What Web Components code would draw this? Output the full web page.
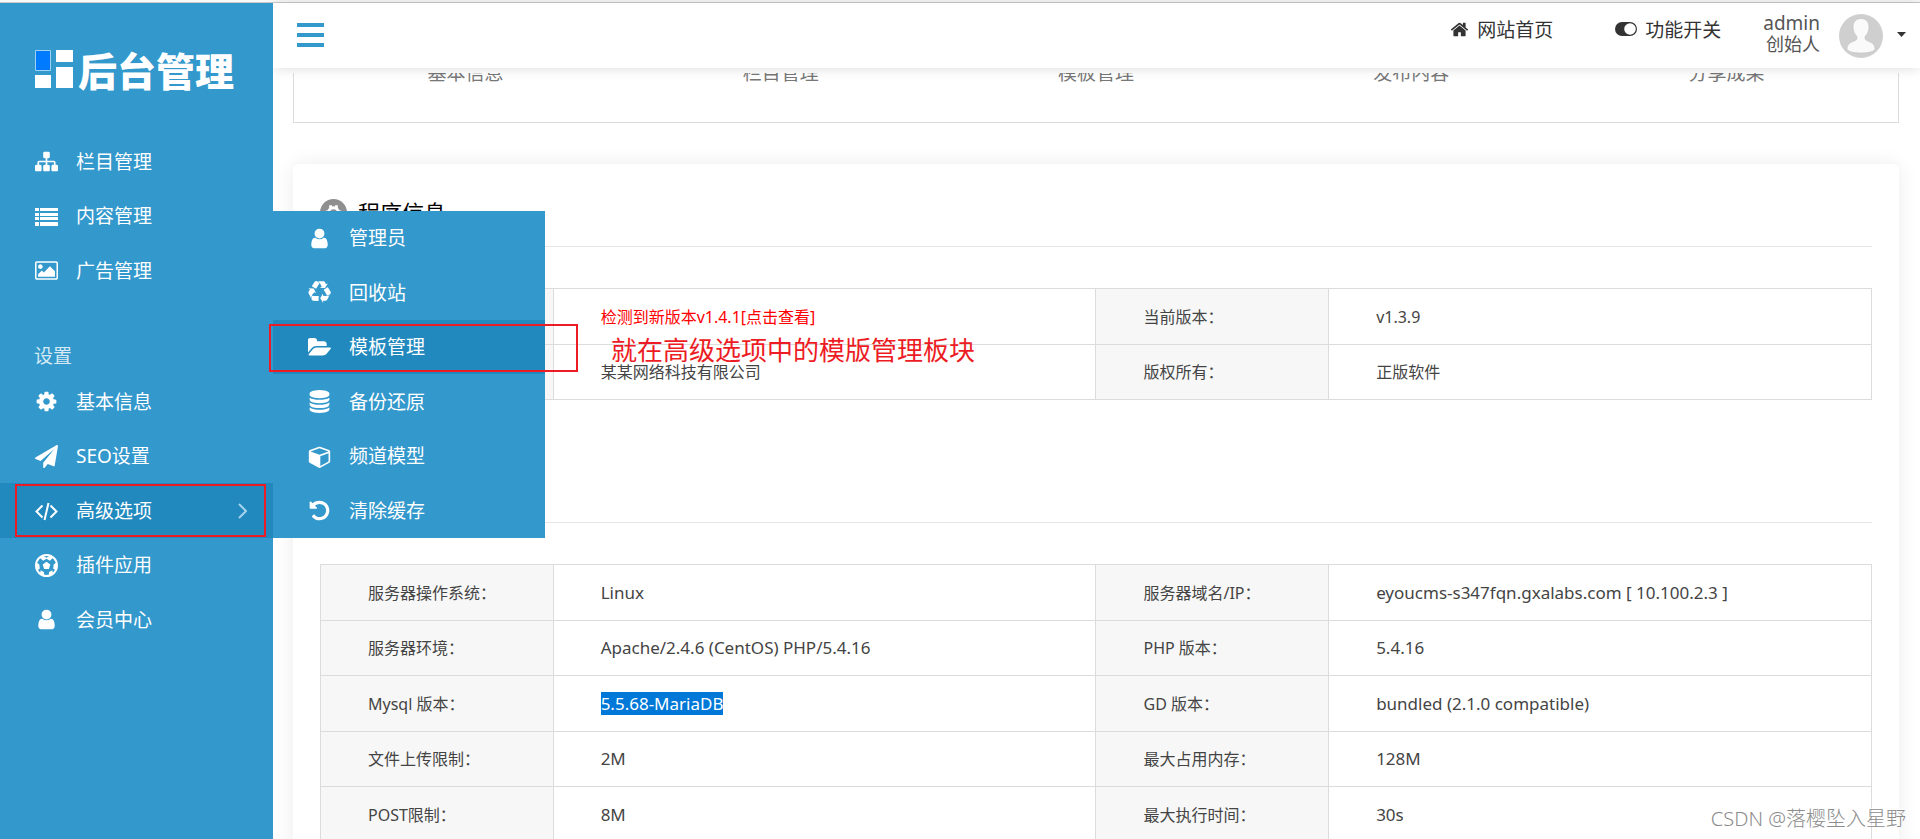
<!DOCTYPE html>
<html lang="zh-CN">
<head>
<meta charset="utf-8">
<title>后台管理</title>
<style>
body{margin:0;font-family:"Noto Sans","Noto Sans CJK SC",sans-serif;font-size:16px;color:#444;background:#fff}
</style>
</head>
<body>
<admin-app>
  <side-bar slot="side">
    <nav-group>
      <nav-item icon="sitemap">栏目管理</nav-item>
      <nav-item icon="list">内容管理</nav-item>
      <nav-item icon="image">广告管理</nav-item>
    </nav-group>
    <nav-group heading="设置">
      <nav-item icon="cog">基本信息</nav-item>
      <nav-item icon="plane">SEO设置</nav-item>
      <nav-item icon="code" active more>高级选项
        <nav-flyout slot="flyout">
          <nav-item icon="user">管理员</nav-item>
          <nav-item icon="recycle">回收站</nav-item>
          <nav-item icon="folder" active>模板管理</nav-item>
          <nav-item icon="database">备份还原</nav-item>
          <nav-item icon="cube">频道模型</nav-item>
          <nav-item icon="undo">清除缓存</nav-item>
        </nav-flyout>
      </nav-item>
      <nav-item icon="ball">插件应用</nav-item>
      <nav-item icon="user">会员中心</nav-item>
    </nav-group>
  </side-bar>
  <top-bar slot="top"></top-bar>
  <quick-links></quick-links>
  <info-card>
    <card-heading icon="gearDisc">程序信息</card-heading>
    <info-table data="program"></info-table>
    <card-heading></card-heading>
    <info-table data="server"></info-table>
  </info-card>
</admin-app>
<mark-box class="m1"></mark-box>
<mark-box class="m2"></mark-box>
<mark-note>就在高级选项中的模版管理板块</mark-note>
<water-mark>CSDN @落樱坠入星野</water-mark>

<script>
const svg = (vb, body) => `<svg viewBox="${vb}" aria-hidden="true" fill="currentColor">${body}</svg>`;
const glyph = d => svg("0 0 1792 1792", `<path d="${d}"/>`);
const ICONS = {
  user: glyph("M1536 1399q0 109-62.500 187t-150.500 78h-854q-88 0-150.500-78t-62.500-187q0-85 8.500-160.500t31.500-152 58.500-131 94-89 134.500-34.500q131 128 313 128t313-128q76 0 134.500 34.500t94 89 58.500 131 31.500 152 8.500 160.500zm-256-887q0 159-112.500 271.500t-271.500 112.500-271.500-112.500-112.500-271.500 112.500-271.500 271.500-112.500 271.500 112.500 112.500 271.500z"),
  sitemap: glyph("M1792 1248v320q0 40-28 68t-68 28h-320q-40 0-68-28t-28-68v-320q0-40 28-68t68-28h96v-192h-512v192h96q40 0 68 28t28 68v320q0 40-28 68t-68 28h-320q-40 0-68-28t-28-68v-320q0-40 28-68t68-28h96v-192h-512v192h96q40 0 68 28t28 68v320q0 40-28 68t-68 28h-320q-40 0-68-28t-28-68v-320q0-40 28-68t68-28h96v-192q0-52 38-90t90-38h512v-192h-96q-40 0-68-28t-28-68v-320q0-40 28-68t68-28h320q40 0 68 28t28 68v320q0 40-28 68t-68 28h-96v192h512q52 0 90 38t38 90v192h96q40 0 68 28t28 68z"),
  list: svg("0 0 23 23", `<path d="M0 3h4v3H0zM5 3h18v3H5zM0 8h4v3H0zM5 8h18v3H5zM0 12h4v3H0zM5 12h18v3H5zM0 17h4v4H0zM5 17h18v4H5z"/>`),
  image: svg("-64 0 1920 1792", `<path d="M576 576q0 80-56 136t-136 56-136-56-56-136 56-136 136-56 136 56 56 136zm1024 384v448h-1408v-192l320-320 160 160 512-512zm96-704h-1600q-13 0-22.500 9.500t-9.500 22.500v1216q0 13 9.500 22.500t22.500 9.500h1600q13 0 22.500-9.500t9.500-22.500v-1216q0-13-9.500-22.500t-22.500-9.500zm160 32v1216q0 66-47 113t-113 47h-1600q-66 0-113-47t-47-113v-1216q0-66 47-113t113-47h1600q66 0 113 47t47 113z"/>`),
  cog: glyph("M1152 896q0-106-75-181t-181-75-181 75-75 181 75 181 181 75 181-75 75-181zm512-109v222q0 12-8 23t-20 13l-185 28q-19 54-39 91 35 50 107 138 10 12 10 25t-9 23q-27 37-99 108t-94 71q-12 0-26-9l-138-108q-44 23-91 38-16 136-29 186-7 28-36 28h-222q-14 0-24.500-8.500t-11.500-21.500l-28-184q-49-16-90-37l-141 107q-10 9-25 9-14 0-25-11-126-114-165-168-7-10-7-23 0-12 8-23 15-21 51-66.500t54-70.500q-27-50-41-99l-183-27q-13-2-21-12.500t-8-23.500v-222q0-12 8-23t19-13l186-28q14-46 39-92-40-57-107-138-10-12-10-24 0-10 9-23 26-36 98.500-107.500t94.500-71.500q13 0 26 10l138 107q44-23 91-38 16-136 29-186 7-28 36-28h222q14 0 24.500 8.500t11.500 21.500l28 184q49 16 90 37l142-107q9-9 24-9 13 0 25 10 129 119 165 170 7 8 7 22 0 12-8 23-15 21-51 66.500t-54 70.500q26 50 41 98l183 28q13 2 21 12.500t8 23.500z"),
  plane: glyph("M1764 11q33 24 27 64l-256 1536q-5 29-32 45-14 8-31 8-11 0-24-5l-453-185-242 295q-18 23-49 23-13 0-22-4-19-7-30.500-23.500t-11.500-36.500v-349l864-1059-1069 925-395-162q-37-14-40-55-2-40 32-59l1664-960q15-9 32-9 20 0 36 11z"),
  code: svg("0 0 23 23", `<path fill="none" stroke="currentColor" stroke-width="2" d="M7.500 6.500L1.500 12.500l6 6M15.500 6.500l6 6-6 6M13.500 4l-4 17"/>`),
  ball: svg("0 0 24 24", `<circle cx="12" cy="12" r="11" fill="none" stroke="currentColor" stroke-width="2"/><path d="M12 8l4 3-1.500 4.700h-5L8 11zM8 1.500L12 4l4-2.500 3 2.500-3.500 3L12 5 8.500 7 5 4zM1.500 8.500L4.500 11l.5 4.500-3 1.500L.8 12zM22.500 8.500L19.500 11l-.5 4.500 3 1.500 1.200-5zM6 17l3.500 2-.3 4L5 21zM18 17l-3.500 2 .3 4L19 21z"/>`),
  recycle: glyph("M836 1169l-15 368-2 22-420-29q-36-3-67-31.500t-47-65.500q-11-27-14.500-55t4-65 12-55 21.500-64 19-53q78 12 509 28zm-387-586l180 379-147-92q-63 72-111.500 144.500t-72.500 125-39.500 94.500-18.500 63l-4 21-190-357q-17-26-18-56t6-47l8-18q35-63 114-188l-140-86zm1231 517l-188 359q-12 29-36.500 46.500t-43.500 20.500l-18 4q-71 7-219 12l8 164-230-367 211-362 7 173q170 16 283 5t170-33zm-785-924q-47 63-265 435l-317-187-19-12 225-356q20-31 60-45t80-10q24 2 48.500 12t42 21 41.500 33 36 34.500 36 39.500 32 35zm655 307l212 363q18 37 12.500 76t-27.500 74q-13 20-33 37t-38 28-48.500 22-47 16-51.500 14-46 12q-34-72-265-436l313-195zm-143-226l142-83-220 373-419-20 151-86q-34-89-75-166t-75.500-123.500-64.500-80-47-46.500l-17-13 405 1q31-3 58 10.500t39 28.500l11 15q39 61 112 190z"),
  folder: svg("-30 0 1850 1792", `<path d="M1815 952q0 31-31 66l-336 396q-43 51-120.500 86.500t-143.500 35.500h-1088q-34 0-60.500-13t-26.500-43q0-31 31-66l336-396q43-51 120.500-86.500t143.500-35.500h1088q34 0 60.500 13t26.500 43zm-343-344v160h-832q-94 0-197 47.500t-164 119.500l-337 396-5 6q0-4-.5-12.500t-.5-12.500v-960q0-92 66-158t158-66h320q92 0 158 66t66 158v32h544q92 0 158 66t66 158z"/>`),
  database: glyph("M896 768q237 0 443-43t325-127v170q0 69-103 128t-280 93.500-385 34.500-385-34.500-280-93.500-103-128v-170q119 84 325 127t443 43zm0 768q237 0 443-43t325-127v170q0 69-103 128t-280 93.500-385 34.500-385-34.500-280-93.500-103-128v-170q119 84 325 127t443 43zm0-384q237 0 443-43t325-127v170q0 69-103 128t-280 93.500-385 34.500-385-34.500-280-93.500-103-128v-170q119 84 325 127t443 43zm0-1152q208 0 385 34.500t280 93.500 103 128v128q0 69-103 128t-280 93.500-385 34.500-385-34.500-280-93.500-103-128v-128q0-69 103-128t280-93.500 385-34.500z"),
  cube: svg("-64 0 1792 1792", `<path d="M896 1629l640-349v-636l-640 233v752zm-64-865l698-254-698-254-698 254zm832-252v768q0 35-18 65t-49 47l-704 384q-28 16-61 16t-61-16l-704-384q-31-17-49-47t-18-65v-768q0-40 23-73t61-47l704-256q22-8 44-8t44 8l704 256q38 14 61 47t23 73z"/>`),
  undo: glyph("M1664 896q0 156-61 298t-164 245-245 164-298 61q-172 0-327-72.500t-264-204.500q-7-10-6.500-22.500t8.500-20.500l137-138q10-9 25-9 16 2 23 12 73 95 179 147t225 52q104 0 198.500-40.500t163.500-109.500 109.500-163.500 40.500-198.500-40.500-198.500-109.500-163.500-163.500-109.500-198.500-40.500q-98 0-188 35.500t-160 101.500l137 138q31 30 14 69-17 40-59 40h-448q-26 0-45-19t-19-45v-448q0-42 40-59 39-17 69 14l130 129q107-101 244.500-156.500t284.500-55.500q156 0 298 61t245 164 164 245 61 298z"),
  home: glyph("M1472 992v480q0 26-19 45t-45 19h-384v-384h-256v384h-384q-26 0-45-19t-19-45v-480q0-1 .5-3t.5-3l575-474 575 474q1 2 1 6zm223-69l-62 74q-8 9-21 11h-3q-13 0-21-7l-692-577-692 577q-12 8-24 7-13-2-21-11l-62-74q-8-10-7-23.500t11-21.500l719-599q32-26 76-26t76 26l244 204v-195q0-14 9-23t23-9h192q14 0 23 9t9 23v408l219 182q10 8 11 21.500t-7 23.500z"),
  toggle: svg("0 0 22 19", `<rect y="2" width="22" height="14" rx="7"/><circle cx="15" cy="9" r="5.800" fill="#fff"/>`),
  gearDisc: svg("0 0 28 28", `<circle cx="14" cy="14" r="14" fill="#8f8f8f"/><circle cx="14" cy="14" r="5" fill="none" stroke="#fff" stroke-width="3"/><path fill="#fff" d="M9.500 6.500h3v3h-3zM15.500 6.500h3v3h-3zM6 12h3v4H6zM19 12h3v4h-3zM9.500 19h3v3h-3zM15.500 19h3v3h-3z"/>`)
};

const define = (name, render) => customElements.define(name, class extends HTMLElement {
  constructor(){ super(); this.attachShadow({mode:"open"}); }
  connectedCallback(){ this.shadowRoot.innerHTML = render(this); }
});

define("admin-app", () => `<style>
:host{display:flex;flex-direction:column;height:100vh;overflow:hidden}
.edge{flex:none;height:2px;background:#fafafa;border-bottom:1px solid #ccc}
.shell{flex:1;display:flex;min-height:0}
.main{flex:1;display:flex;flex-direction:column;min-width:0}
main{flex:1;min-height:0;margin-top:5px;padding:0 21px 0 20px;overflow:hidden}
</style>
<div class="edge"></div>
<div class="shell"><slot name="side"></slot><div class="main"><slot name="top"></slot><main><slot></slot></main></div></div>`);

define("side-bar", () => `<style>
:host{display:flex;flex-direction:column;flex:none;width:273px;background:#3398cc;color:#fff;position:relative;z-index:3}
h1{display:flex;align-items:center;gap:4px;height:80px;margin:26px 0 25px;padding-left:35px;font-size:39px;line-height:40px;font-weight:900;font-family:"Noto Sans CJK SC",sans-serif}
svg{width:40px;height:40px;margin-left:-1px}
</style>
<h1><svg viewBox="0 0 40 40" aria-hidden="true"><path fill="#fff" d="M22 1h17v12H22zM22 18h17v21H22zM1 26h16v13H1z"/><path fill="#007bff" stroke="#9fd0f5" d="M1.500 1.500h15v20h-15z"/></svg><span>后台管理</span></h1>
<nav><slot></slot></nav>`);

define("nav-group", el => `<style>
:host{display:block}
h2{margin:41px 0 1px;padding-left:34px;font-size:19px;line-height:34px;font-weight:400;color:#d6eaf5}
</style>${el.getAttribute("heading") ? `<h2>${el.getAttribute("heading")}</h2>` : ""}<slot></slot>`);

define("nav-flyout", () => `<style>
:host{display:block;position:absolute;left:100%;bottom:0;width:272px;background:#3398cc}
::slotted(nav-item:nth-child(odd)){--row:54px}
::slotted(nav-item:nth-child(even)){--row:55px}
</style><slot></slot>`);

define("nav-item", el => `<style>
:host{display:block;position:relative}
:host([active]){background:#2189be}
:host(:nth-child(odd)){--row:55px}
:host(:nth-child(even)){--row:54px}
a{display:flex;align-items:center;height:var(--row);padding:0 26px 0 35px;color:#fff;font-size:19px;line-height:28px;text-decoration:none}
.ico{flex:none;width:23px;height:23px;margin-right:18px}
.ico svg{display:block;width:23px;height:23px}
.label{flex:1;white-space:nowrap}
.more{width:9px;height:16px;color:#a6d3ee}
</style>
<a href="#"><span class="ico">${ICONS[el.getAttribute("icon")]}</span><span class="label"><slot></slot></span>${el.hasAttribute("more") ? `<svg class="more" viewBox="0 0 9 16" fill="none" stroke="currentColor" stroke-width="2" aria-hidden="true"><path d="M1 1l7 7-7 7"/></svg>` : ""}</a><slot name="flyout"></slot>`);

define("top-bar", () => `<style>
:host{display:flex;align-items:center;flex:none;height:65px;padding:0 14px 0 24px;background:#fff;box-shadow:0 0 12px rgba(0,0,0,.15);position:relative;z-index:2;color:#333}
button{border:0;background:none;padding:0;font:inherit;color:inherit}
.menu{display:grid;gap:6px;width:27px;margin:0 auto 2px 0}
.menu i{height:4px;background:#3398cc}
a{display:flex;align-items:center;gap:8px;margin-bottom:12px;font-size:19px;line-height:24px;color:#333;text-decoration:none}
a svg{width:19px;height:19px}
a.switch{margin:0 42px 12px 62px}
a.switch svg{width:22px;height:19px}
.who{display:flex;align-items:center}
.name{display:grid;text-align:right;font-size:19px;line-height:21px;color:#555;margin:0 19px 4px 0}
.name small{font-size:18px}
.avatar{width:44px;height:44px}
.caret{width:9px;height:5px;margin:0 0 2px 14px}
</style>
<button class="menu" aria-label="菜单"><i></i><i></i><i></i></button>
<a href="#">${ICONS.home}网站首页</a>
<a href="#" class="switch">${ICONS.toggle}功能开关</a>
<button class="who"><span class="name"><span>admin</span><small>创始人</small></span>
<svg class="avatar" viewBox="0 0 44 44" aria-hidden="true"><circle cx="22" cy="22" r="22" fill="#cfcfcf"/><path fill="#fafafa" stroke="#bdbdbd" stroke-width=".6" d="M22 4.500c5 0 8 3.500 8 8.500 0 4-1.500 7-3.500 9-.8 1-.7 3 .5 4 2 1.500 9 2.500 9 8.500 0 3-6 4.500-14 4.500S8 37.500 8 34.500c0-6 7-7 9-8.500 1.200-1 1.300-3 .5-4-2-2-3.500-5-3.500-9 0-5 3-8.500 8-8.500z"/></svg>
<svg class="caret" viewBox="0 0 9 5" aria-hidden="true"><path fill="#333" d="M0 0h9L4.500 5z"/></svg></button>`);

define("quick-links", () => `<style>
:host{display:grid;grid-template-columns:repeat(5,1fr);margin-top:-20px;padding:6px 14px 35px;border:1px solid #dcdcdc;border-top:0}
a{text-align:center;font-size:19px;line-height:28px;color:#777;text-decoration:none}
</style>${["基本信息","栏目管理","模板管理","发布内容","分享成果"].map(t => `<a href="#">${t}</a>`).join("")}`);

define("info-card", () => `<style>
:host{display:block;margin-top:41px;padding:0 27px 40px;border-radius:6px;background:#fff;box-shadow:0 0 20px rgba(0,0,0,.08)}
</style><slot></slot>`);

define("card-heading", el => `<style>
:host{display:block;border-bottom:1px solid #e3e7e9}
h3{display:flex;align-items:center;gap:11px;height:32px;margin:0;padding:32px 0 18px;font-size:22px;line-height:32px;font-weight:400;color:#000}
svg{width:27px;height:27px}
</style><h3>${ICONS[el.getAttribute("icon")] || ""}<slot></slot></h3>`);

const DATA = {
  program: [
    ["", `<a href="#">检测到新版本v1.4.1[点击查看]</a>`, "当前版本：", "v1.3.9"],
    ["", "某某网络科技有限公司", "版权所有：", "正版软件"]
  ],
  server: [
    ["服务器操作系统：", "Linux", "服务器域名/IP：", "eyoucms-s347fqn.gxalabs.com [ 10.100.2.3 ]"],
    ["服务器环境：", "Apache/2.4.6 (CentOS) PHP/5.4.16", "PHP 版本：", "5.4.16"],
    ["Mysql 版本：", "<mark>5.5.68-MariaDB</mark>", "GD 版本：", "bundled (2.1.0 compatible)"],
    ["文件上传限制：", "2M", "最大占用内存：", "128M"],
    ["POST限制：", "8M", "最大执行时间：", "30s"]
  ]
};
define("info-table", el => `<style>
:host{display:block;margin:41px 0 40px}
table{width:100%;table-layout:fixed;border-spacing:0;border:1px solid #dcdcdc;border-width:1px 0 0 1px}
th,td{box-sizing:border-box;height:56px;padding:0 0 0 47px;border:1px solid #dcdcdc;border-width:0 1px 1px 0;text-align:left;font-weight:400;line-height:22px}
tr:nth-child(even)>*{height:55px}
th{width:15%;background:#f7f7f7}
td{width:35%}
:host([data=server]) td{font-size:17px}
a{color:#f00;text-decoration:none}
mark{background:#0078d7;color:#fff}
</style><table><tbody>${DATA[el.getAttribute("data")].map(r => `<tr><th scope="row">${r[0]}</th><td>${r[1]}</td><th scope="row">${r[2]}</th><td>${r[3]}</td></tr>`).join("")}</tbody></table>`);

define("mark-box", () => `<style>
:host{display:block;box-sizing:border-box;position:absolute;z-index:5;border:2px solid #ed1c24;pointer-events:none}
:host(.m1){left:15px;top:484px;width:251px;height:53px}
:host(.m2){left:269px;top:324px;width:309px;height:48px}
</style>`);
define("mark-note", () => `<style>
:host{display:block;position:absolute;z-index:5;left:611px;top:332px;font-size:26px;line-height:36px;color:#ed1c24;white-space:nowrap}
</style><slot></slot>`);
define("water-mark", () => `<style>
:host{display:block;position:absolute;z-index:5;right:14px;bottom:6px;font-size:20px;line-height:28px;font-weight:300;color:#8c8c8c;text-shadow:-1px -1px 0 #fff;white-space:nowrap}
</style><slot></slot>`);
</script>
</body>
</html>
